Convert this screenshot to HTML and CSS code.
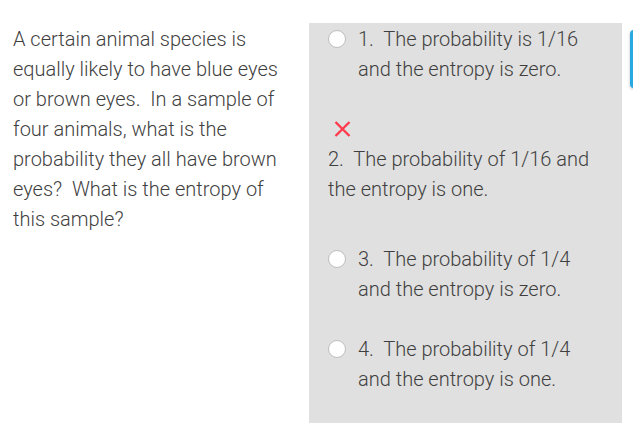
FILE: index.html
```html
<!DOCTYPE html>
<html>
<head>
<meta charset="utf-8">
<link rel="stylesheet" href="styles.css">
</head>
<body>
<div class="page">
  <div class="question">A certain animal species is equally likely to have blue eyes or brown eyes.&nbsp; In a sample of four animals, what is the probability they all have brown eyes?&nbsp; What is the entropy of this sample?</div>
  <div class="panel">
    <div class="option opt1">
      <span class="radio"></span>
      <span class="label">1.&nbsp; The probability is 1/16 and the entropy is zero.</span>
    </div>
    <div class="option-wrong">
      <div class="mark">
        <svg width="17" height="16" viewBox="0 0 17 16"><path d="M1.5 1 L15.5 15 M15.5 1 L1.5 15" stroke="#ff3b4e" stroke-width="2.4" fill="none"/></svg>
      </div>
      <div class="label">2.&nbsp; The probability of 1/16 and the entropy is one.</div>
    </div>
    <div class="option opt3">
      <span class="radio"></span>
      <span class="label">3.&nbsp; The probability of 1/4 and the entropy is zero.</span>
    </div>
    <div class="option opt4">
      <span class="radio"></span>
      <span class="label">4.&nbsp; The probability of 1/4 and the entropy is one.</span>
    </div>
  </div>
  <div class="side-btn"></div>
</div>
</body>
</html>
```
FILE: styles.css
```css
html, body {
  margin: 0;
  padding: 0;
  background: #ffffff;
  overflow: hidden;
}
body {
  font-family: Roboto, "Liberation Sans", sans-serif;
  font-weight: 300;
  font-size: 20px;
  line-height: 30px;
  color: #3f3f3f;
}
.page {
  display: flex;
  align-items: flex-start;
  box-sizing: border-box;
  width: 633px;
  height: 428px;
  overflow: hidden;
  padding: 23px 0 0 13px;
}
.question {
  width: 282px;
  flex-shrink: 0;
  margin-top: 1px;
  margin-right: 14px;
}
.panel {
  width: 313px;
  height: 400px;
  flex-shrink: 0;
  box-sizing: border-box;
  background: #e0e0e0;
  padding: 1px 20px 0 19px;
}
.option {
  display: flex;
  align-items: flex-start;
  gap: 12px;
}
.radio {
  width: 16px;
  height: 16px;
  flex-shrink: 0;
  margin-top: 6px;
  border: 1px solid #bdbdbd;
  border-radius: 50%;
  background: #ffffff;
}
.opt1 { margin-bottom: 30px; }
.option-wrong { margin-bottom: 40px; }
.opt3 { margin-bottom: 30px; }
.mark {
  height: 30px;
  display: flex;
  align-items: center;
  padding-left: 6px;
}
.mark svg { display: block; }
.side-btn {
  flex-shrink: 0;
  width: 40px;
  height: 58px;
  margin-top: 7px;
  margin-left: 8px;
  background: #27a9e1;
  border-radius: 4px;
  box-shadow: 0 1px 3px rgba(0,0,0,0.25);
}
```
